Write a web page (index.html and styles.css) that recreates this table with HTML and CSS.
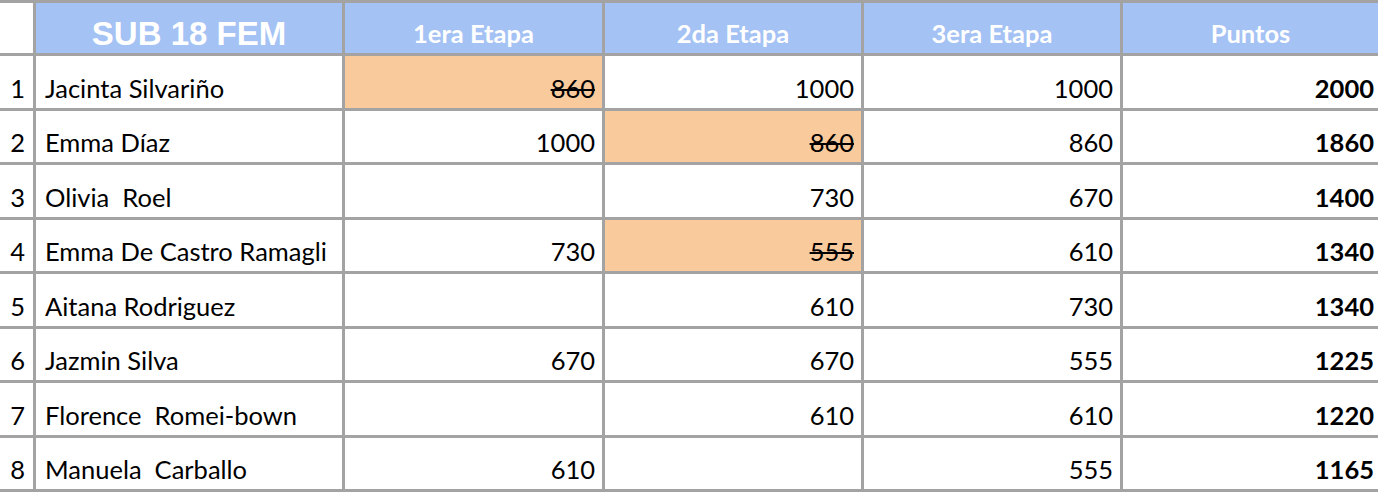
FILE: index.html
```html
<!DOCTYPE html>
<html lang="es">
<head>
<meta charset="utf-8">
<title>SUB 18 FEM</title>
<link rel="stylesheet" href="styles.css">
</head>
<body>
<div class="sheet">
  <div class="cell corner"></div>
  <div class="cell head title">SUB 18 FEM</div>
  <div class="cell head">1era Etapa</div>
  <div class="cell head">2da Etapa</div>
  <div class="cell head">3era Etapa</div>
  <div class="cell head">Puntos</div>

  <div class="cell idx">1</div>
  <div class="cell name">Jacinta Silvariño</div>
  <div class="cell num drop"><s>860</s></div>
  <div class="cell num">1000</div>
  <div class="cell num">1000</div>
  <div class="cell num total">2000</div>

  <div class="cell idx">2</div>
  <div class="cell name">Emma Díaz</div>
  <div class="cell num">1000</div>
  <div class="cell num drop"><s>860</s></div>
  <div class="cell num">860</div>
  <div class="cell num total">1860</div>

  <div class="cell idx">3</div>
  <div class="cell name">Olivia  Roel</div>
  <div class="cell num"></div>
  <div class="cell num">730</div>
  <div class="cell num">670</div>
  <div class="cell num total">1400</div>

  <div class="cell idx">4</div>
  <div class="cell name">Emma De Castro Ramagli</div>
  <div class="cell num">730</div>
  <div class="cell num drop"><s>555</s></div>
  <div class="cell num">610</div>
  <div class="cell num total">1340</div>

  <div class="cell idx">5</div>
  <div class="cell name">Aitana Rodriguez</div>
  <div class="cell num"></div>
  <div class="cell num">610</div>
  <div class="cell num">730</div>
  <div class="cell num total">1340</div>

  <div class="cell idx">6</div>
  <div class="cell name">Jazmin Silva</div>
  <div class="cell num">670</div>
  <div class="cell num">670</div>
  <div class="cell num">555</div>
  <div class="cell num total">1225</div>

  <div class="cell idx">7</div>
  <div class="cell name">Florence  Romei-bown</div>
  <div class="cell num"></div>
  <div class="cell num">610</div>
  <div class="cell num">610</div>
  <div class="cell num total">1220</div>

  <div class="cell idx">8</div>
  <div class="cell name">Manuela  Carballo</div>
  <div class="cell num">610</div>
  <div class="cell num"></div>
  <div class="cell num">555</div>
  <div class="cell num total">1165</div>
</div>
</body>
</html>
```
FILE: styles.css
```css
html, body {
  margin: 0;
  padding: 0;
  background: #ffffff;
}

.sheet {
  display: grid;
  grid-template-columns: 33px 306px 257px 256px 256px 1fr;
  grid-template-rows: 50px;
  grid-auto-rows: 51.5px;
  gap: 3px;
  padding: 3px 0 3px 0;
  background: #a3a3a3;
  font-family: "Lato", "Open Sans", sans-serif;
  font-size: 25.5px;
  color: #000000;
}

.cell {
  background: #ffffff;
  display: flex;
  align-items: flex-end;
  padding-bottom: 4px;
  box-sizing: border-box;
  white-space: pre;
  overflow: hidden;
  line-height: 1.2;
}

.head {
  background: #a4c2f4;
  color: #ffffff;
  font-weight: 700;
  justify-content: center;
  align-items: center;
  padding-bottom: 0;
  padding-top: 10px;
}

.corner {
  background: #ffffff;
}

.title {
  font-family: "Liberation Sans", Arial, sans-serif;
  font-size: 33px;
  padding-top: 12px;
}

.idx {
  justify-content: flex-end;
  padding-right: 8px;
}

.name {
  padding-left: 9px;
}

.num {
  justify-content: flex-end;
  padding-right: 7px;
}

.drop {
  background: #f8ca9c;
}

.drop s {
  text-decoration-thickness: 2px;
}

.total {
  font-weight: 700;
  padding-right: 4px;
}
```
